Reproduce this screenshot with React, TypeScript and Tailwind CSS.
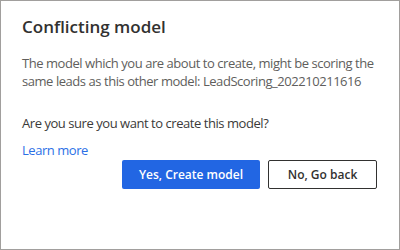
export default function App() {
  return (
    <div
      className="w-[400px] h-[250px] border border-[#a19f9d] bg-white flex flex-col px-[21px] pt-[14px]"
      style={{ fontFamily: '"Open Sans", "Noto Sans", sans-serif' }}
    >
      <h1 className="text-[17px] leading-[24px] font-semibold text-[#323130]">Conflicting model</h1>
      <p className="mt-[15px] text-[13px] leading-[18px] tracking-[-0.45px] text-[#605e5c] whitespace-nowrap">
        The model which you are about to create, might be scoring the
        <br />
        same leads as this other model: LeadScoring_202210211616
      </p>
      <p className="mt-[24px] text-[13px] leading-[18px] tracking-[-0.45px] text-[#3b3a39]">
        Are you sure you want to create this model?
      </p>
      <a href="#" className="mt-[9px] text-[13px] leading-[18px] tracking-[-0.45px] text-[#2b6fe6] self-start">
        Learn more
      </a>
      <div className="flex justify-end gap-[8px] pr-[1px] mt-[1px]">
        <button className="h-[29px] w-[138px] rounded-[2px] bg-[#2266e3] text-white text-[12px] font-semibold">
          Yes, Create model
        </button>
        <button className="h-[29px] w-[109px] rounded-[2px] border border-[#323130] bg-white text-[#323130] text-[12px] font-semibold">
          No, Go back
        </button>
      </div>
    </div>
  );
}
